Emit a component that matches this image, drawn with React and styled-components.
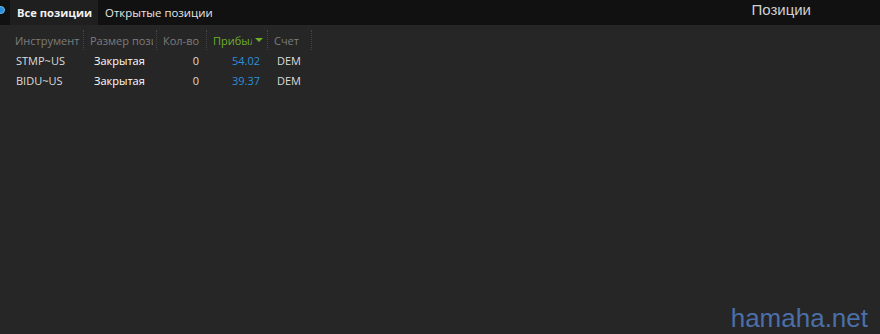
import styled, { createGlobalStyle } from 'styled-components';

const Global = createGlobalStyle`
  html, body { margin: 0; padding: 0; background: #262626; }
  body { font-family: "Open Sans", "Liberation Sans", sans-serif; }
`;

const Page = styled.div`
  width: 880px;
  height: 334px;
  background: #262626;
  display: flex;
  flex-direction: column;
  position: relative;
  overflow: hidden;
`;

const TopBar = styled.div`
  height: 25px;
  background: #111111;
  display: flex;
  align-items: stretch;
  padding-left: 10px;
  position: relative;
`;

const Dot = styled.span`
  position: absolute;
  left: -3px;
  top: 6px;
  width: 6px;
  height: 6px;
  border-radius: 50%;
  background: #2b8ed8;
  border: 1px solid #6ab4ea;
`;

const Tab = styled.div`
  display: flex;
  align-items: center;
  padding: 0 ${p => (p.$active ? '6px 0 7px' : '7px')};
  background: ${p => (p.$active ? '#1f1f1f' : 'transparent')};
  color: ${p => (p.$active ? '#f2f2f2' : '#e6e6e6')};
  font-weight: ${p => (p.$active ? 700 : 400)};
  font-size: ${p => (p.$active ? '11.2px' : '11.4px')};
`;

const Title = styled.div`
  margin-left: auto;
  margin-right: 69px;
  align-self: flex-start;
  color: #cfcfcf;
  font-family: "Liberation Sans", Arial, sans-serif;
  font-size: 15px;
  line-height: 19px;
`;

const Grid = styled.div`
  padding: 5px 0 0 9px;
  display: grid;
  grid-template-columns: 75px 73px 50px 61px 44px;
  font-size: 11px;
`;

const HeadCell = styled.div`
  height: 20px;
  display: flex;
  align-items: center;
  padding: 0 3px 0 6px;
  color: ${p => (p.$sorted ? '#6fae2a' : '#7c7c7c')};
  border-right: 1px dotted #444;
  min-width: 0;
`;

const Label = styled.span`
  flex: 1;
  min-width: 0;
  overflow: hidden;
  white-space: nowrap;
`;

const Arrow = styled.span`
  flex: none;
  margin: 0 1px 0 3px;
  width: 0;
  height: 0;
  border-left: 4px solid transparent;
  border-right: 4px solid transparent;
  border-top: 4px solid #6fae2a;
`;

const Cell = styled.div`
  height: 20px;
  display: flex;
  align-items: center;
  padding: ${p => p.$pad || '0 7px'};
  justify-content: ${p => (p.$right ? 'flex-end' : 'flex-start')};
  color: ${p => p.$color || '#dcdcdc'};
  white-space: nowrap;
`;

const Watermark = styled.div`
  position: absolute;
  right: 12px;
  bottom: 2px;
  color: #4b6fa8;
  font-family: "Liberation Sans", Arial, sans-serif;
  font-size: 26px;
  line-height: 28px;
`;

const rows = [
  ['STMP~US', 'Закрытая', '0', '54.02', 'DEM'],
  ['BIDU~US', 'Закрытая', '0', '39.37', 'DEM'],
];

export default function App() {
  return (
    <Page>
      <Global />
      <TopBar>
        <Dot />
        <Tab $active>Все позиции</Tab>
        <Tab>Открытые позиции</Tab>
        <Title>Позиции</Title>
      </TopBar>
      <Grid>
        <HeadCell><Label>Инструмент</Label></HeadCell>
        <HeadCell><Label>Размер позиции</Label></HeadCell>
        <HeadCell><Label>Кол-во</Label></HeadCell>
        <HeadCell $sorted><Label>Прибыль</Label><Arrow /></HeadCell>
        <HeadCell><Label>Счет</Label></HeadCell>
        {rows.map(r => (
          <>
            <Cell>{r[0]}</Cell>
            <Cell $pad="0 0 0 10px" $color="#ffffff">{r[1]}</Cell>
            <Cell $right $pad="0 8px">{r[2]}</Cell>
            <Cell $right $pad="0 8px" $color="#2e8fd8">{r[3]}</Cell>
            <Cell $pad="0 0 0 9px">{r[4]}</Cell>
          </>
        ))}
      </Grid>
      <Watermark>hamaha.net</Watermark>
    </Page>
  );
}
